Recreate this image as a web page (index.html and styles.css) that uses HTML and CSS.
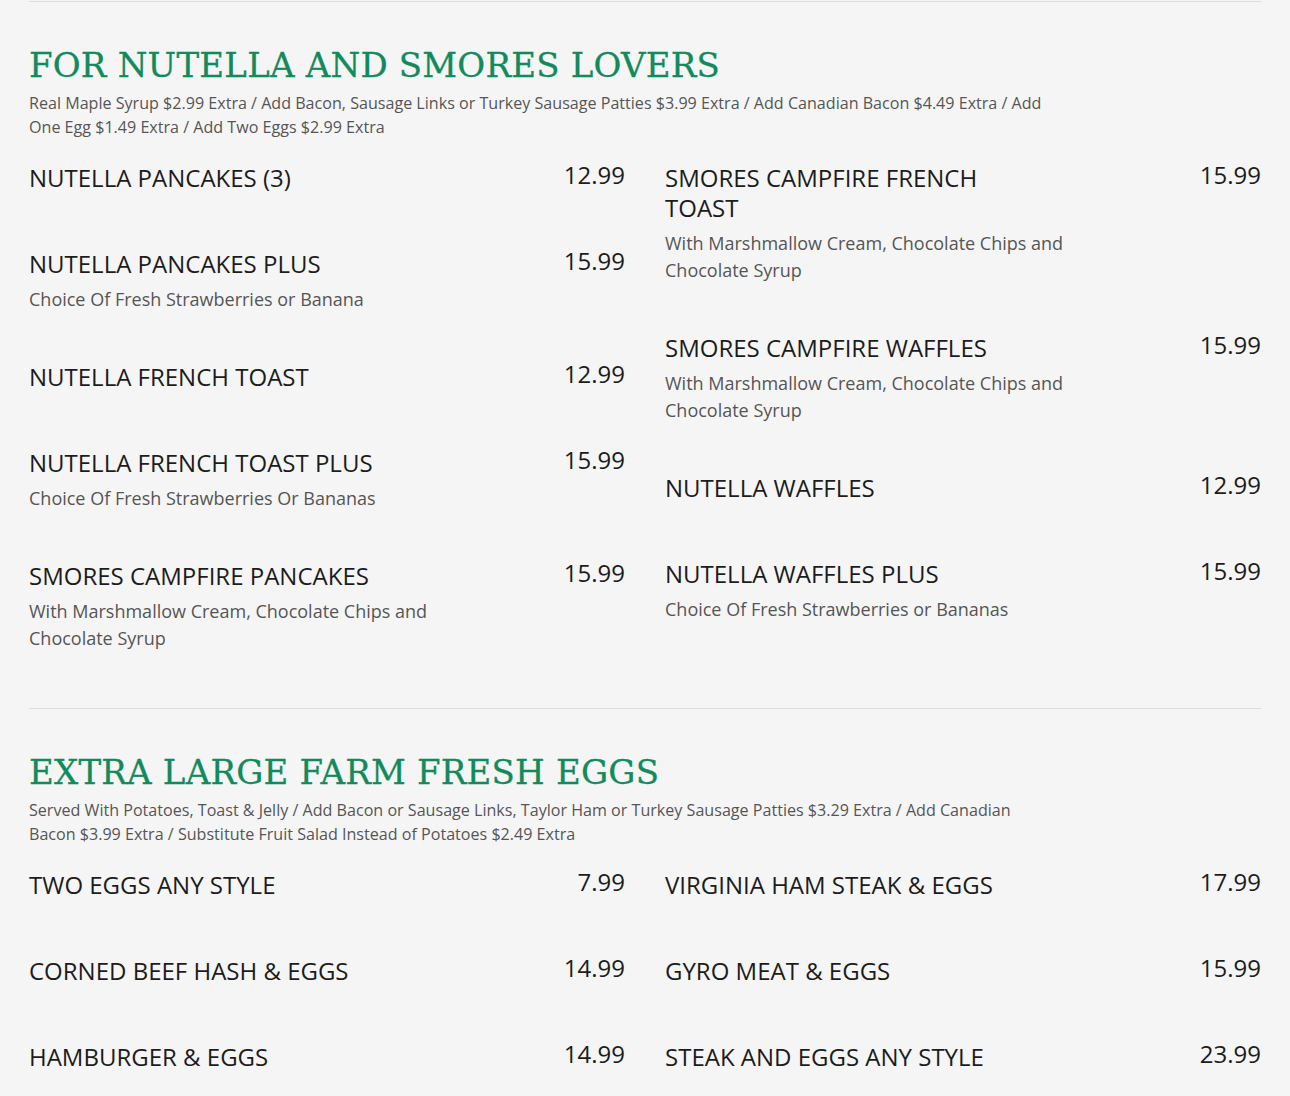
FILE: index.html
```html
<!DOCTYPE html>
<html lang="en">
<head>
<meta charset="utf-8">
<title>Menu</title>
<link rel="stylesheet" href="styles.css">
</head>
<body>
<main class="menu">
  <section class="section">
    <h2 class="section-title">FOR NUTELLA AND SMORES LOVERS</h2>
    <p class="section-desc">Real Maple Syrup $2.99 Extra / Add Bacon, Sausage Links or Turkey Sausage Patties $3.99 Extra / Add Canadian Bacon $4.49 Extra / Add One Egg $1.49 Extra / Add Two Eggs $2.99 Extra</p>
    <div class="items">
      <div class="col">
        <div class="item"><div class="item-head"><h3 class="name">NUTELLA PANCAKES (3)</h3><span class="price">12.99</span></div><p class="desc"></p></div>
        <div class="item"><div class="item-head"><h3 class="name">NUTELLA PANCAKES PLUS</h3><span class="price">15.99</span></div><p class="desc">Choice Of Fresh Strawberries or Banana</p></div>
        <div class="item"><div class="item-head"><h3 class="name">NUTELLA FRENCH TOAST</h3><span class="price">12.99</span></div><p class="desc"></p></div>
        <div class="item"><div class="item-head"><h3 class="name">NUTELLA FRENCH TOAST PLUS</h3><span class="price">15.99</span></div><p class="desc">Choice Of Fresh Strawberries Or Bananas</p></div>
        <div class="item"><div class="item-head"><h3 class="name">SMORES CAMPFIRE PANCAKES</h3><span class="price">15.99</span></div><p class="desc">With Marshmallow Cream, Chocolate Chips and Chocolate Syrup</p></div>
      </div>
      <div class="col">
        <div class="item"><div class="item-head"><h3 class="name">SMORES CAMPFIRE FRENCH TOAST</h3><span class="price">15.99</span></div><p class="desc">With Marshmallow Cream, Chocolate Chips and Chocolate Syrup</p></div>
        <div class="item"><div class="item-head"><h3 class="name">SMORES CAMPFIRE WAFFLES</h3><span class="price">15.99</span></div><p class="desc">With Marshmallow Cream, Chocolate Chips and Chocolate Syrup</p></div>
        <div class="item"><div class="item-head"><h3 class="name">NUTELLA WAFFLES</h3><span class="price">12.99</span></div><p class="desc"></p></div>
        <div class="item"><div class="item-head"><h3 class="name">NUTELLA WAFFLES PLUS</h3><span class="price">15.99</span></div><p class="desc">Choice Of Fresh Strawberries or Bananas</p></div>
      </div>
    </div>
  </section>
  <section class="section">
    <h2 class="section-title">EXTRA LARGE FARM FRESH EGGS</h2>
    <p class="section-desc">Served With Potatoes, Toast &amp; Jelly / Add Bacon or Sausage Links, Taylor Ham or Turkey Sausage Patties $3.29 Extra / Add Canadian Bacon $3.99 Extra / Substitute Fruit Salad Instead of Potatoes $2.49 Extra</p>
    <div class="items">
      <div class="col">
        <div class="item"><div class="item-head"><h3 class="name">TWO EGGS ANY STYLE</h3><span class="price">7.99</span></div><p class="desc"></p></div>
        <div class="item"><div class="item-head"><h3 class="name">CORNED BEEF HASH &amp; EGGS</h3><span class="price">14.99</span></div><p class="desc"></p></div>
        <div class="item"><div class="item-head"><h3 class="name">HAMBURGER &amp; EGGS</h3><span class="price">14.99</span></div><p class="desc"></p></div>
      </div>
      <div class="col">
        <div class="item"><div class="item-head"><h3 class="name">VIRGINIA HAM STEAK &amp; EGGS</h3><span class="price">17.99</span></div><p class="desc"></p></div>
        <div class="item"><div class="item-head"><h3 class="name">GYRO MEAT &amp; EGGS</h3><span class="price">15.99</span></div><p class="desc"></p></div>
        <div class="item"><div class="item-head"><h3 class="name">STEAK AND EGGS ANY STYLE</h3><span class="price">23.99</span></div><p class="desc"></p></div>
      </div>
    </div>
  </section>
</main>
</body>
</html>
```

FILE: styles.css
```css
html, body {
  margin: 0;
  padding: 0;
  background: #f5f5f5;
}

body {
  font-family: "Open Sans", "Noto Sans", "Liberation Sans", sans-serif;
  font-stretch: 88%;
  color: #222;
}

.menu {
  padding: 1px 29px 0;
}

.section {
  border-top: 1px solid #dcdcdc;
  padding-top: 39px;
  padding-bottom: 7px;
}

.section-title {
  margin: 0;
  font-family: "DejaVu Serif", "Liberation Serif", serif;
  font-stretch: normal;
  font-weight: normal;
  font-size: 34px;
  line-height: 48px;
  letter-spacing: 0.2px;
  color: #138a5c;
  -webkit-text-stroke: 0.3px #138a5c;
}

.section-desc {
  margin: 2px 0 0;
  max-width: 1025px;
  font-size: 16.1px;
  line-height: 24px;
  color: #555;
}

.items {
  display: grid;
  grid-template-columns: 1fr 1fr;
  column-gap: 40px;
  margin-top: 24px;
}

.item {
  padding-bottom: 49px;
}

.item-head {
  display: flex;
  justify-content: space-between;
  align-items: flex-start;
}

.name {
  margin: 0;
  max-width: 360px;
  font-weight: normal;
  font-size: 24px;
  line-height: 30px;
  color: #1c1c1c;
}

.price {
  font-size: 24px;
  line-height: 30px;
  margin-top: -3px;
  color: #1c1c1c;
}

.desc {
  margin: 7px 0 0;
  max-width: 410px;
  font-size: 18px;
  line-height: 27px;
  color: #555;
}
```
